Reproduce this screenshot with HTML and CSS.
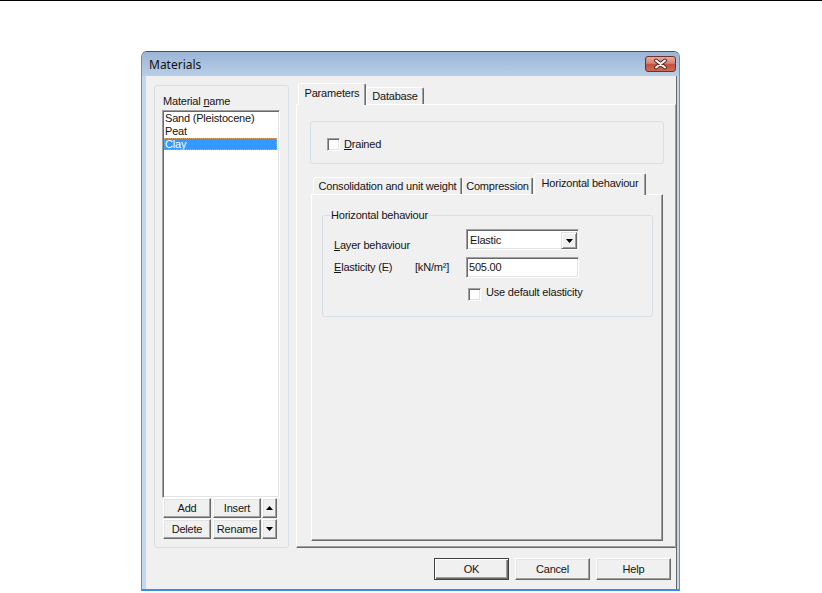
FILE: index.html
```html
<!DOCTYPE html>
<html>
<head>
<meta charset="utf-8">
<title>Materials</title>
<link rel="stylesheet" href="styles.css">
</head>
<body>
<div class="topline"></div>
<div class="window">
  <div class="titlebar">
    <span class="title">Materials</span>
    <div class="close">
      <svg width="29" height="14" viewBox="0 0 29 14"><path d="M10 3.5 L19 10.5 M19 3.5 L10 10.5" stroke="#5a2a24" stroke-width="4" stroke-linecap="round"/><path d="M10 3.5 L19 10.5 M19 3.5 L10 10.5" stroke="#fff" stroke-width="2" stroke-linecap="round"/></svg>
    </div>
  </div>
  <div class="client">
    <div class="main">
      <div class="group left-group">
        <div class="list-label">Material <u>n</u>ame</div>
        <div class="listbox">
          <div class="item">Sand (Pleistocene)</div>
          <div class="item">Peat</div>
          <div class="item selected">Clay</div>
        </div>
        <div class="btnrow">
          <button class="btn small">Add</button>
          <button class="btn small">Insert</button>
          <button class="btn arrow"><svg width="7" height="4" viewBox="0 0 7 4"><path d="M3.5 0 L7 4 L0 4Z"/></svg></button>
        </div>
        <div class="btnrow">
          <button class="btn small">Delete</button>
          <button class="btn small">Rename</button>
          <button class="btn arrow"><svg width="7" height="4" viewBox="0 0 7 4"><path d="M0 0 L7 0 L3.5 4Z"/></svg></button>
        </div>
      </div>
      <div class="tabctl">
        <div class="tabstrip">
          <div class="tab active tp">Parameters</div>
          <div class="tab td">Database</div>
        </div>
        <div class="page outer-page">
          <div class="group drained">
            <div class="check"><span class="cb"></span><span><u>D</u>rained</span></div>
          </div>
          <div class="inner-tabctl">
            <div class="tabstrip inner">
              <div class="tab t1">Consolidation and unit weight</div>
              <div class="tab t2">Compression</div>
              <div class="tab active t3">Horizontal behaviour</div>
            </div>
            <div class="page inner-page">
              <fieldset class="hgroup">
                <legend>Horizontal behaviour</legend>
                <div class="hgrid">
                  <div class="lbl lbl1 span2"><u>L</u>ayer behaviour</div>
                  <div class="combo"><span class="combo-text">Elastic</span><span class="ddbtn"><svg width="7" height="4" viewBox="0 0 7 4"><path d="M0 0 L7 0 L3.5 4Z"/></svg></span></div>
                  <div class="lbl lbl2"><u>E</u>lasticity (E)</div>
                  <div class="lbl lbl2">[kN/m²]</div>
                  <div class="edit">505.00</div>
                  <div class="check check3"><span class="cb"></span><span class="ctext">Use default elasticity</span></div>
                </div>
              </fieldset>
            </div>
          </div>
        </div>
      </div>
    </div>
    <div class="footer">
      <button class="btn big default">OK</button>
      <button class="btn big">Cancel</button>
      <button class="btn big">Help</button>
    </div>
  </div>
</div>
</body>
</html>
```

FILE: styles.css
```css
* { box-sizing: border-box; }
html, body { margin: 0; padding: 0; }
body {
  width: 822px;
  height: 593px;
  background: #fff;
  font-family: "Liberation Sans", Arial, sans-serif;
  font-size: 11px;
  letter-spacing: -0.2px;
  line-height: 13px;
  color: #141414;
  overflow: hidden;
}
u { text-decoration: underline; text-underline-offset: 1px; }

.topline { height: 1px; background: #000; }

.window {
  margin: 50px 0 0 141px;
  width: 539px;
  height: 540px;
  border: 1px solid #7f8b99;
  border-top-color: #4a525c;
  border-bottom: 2px solid #3a8de0;
  border-radius: 6px 6px 0 0;
  background: #c3d8ee;
  display: flex;
  flex-direction: column;
}

.titlebar {
  height: 24px;
  flex: none;
  display: flex;
  align-items: flex-start;
  background: linear-gradient(#9bb5d5, #b8cee8);
  border-radius: 5px 5px 0 0;
}
.title {
  font-family: "Noto Sans", "Open Sans", sans-serif;
  font-size: 12px;
  letter-spacing: 0;
  line-height: 24px;
  padding: 1px 0 0 7px;
  color: #111;
}
.close {
  margin: 4px 3px 0 auto;
  width: 31px;
  height: 16px;
  border: 1px solid #6e3129;
  border-radius: 3px;
  background: linear-gradient(#e6aa9e, #d68170 45%, #c4503e 52%, #d06a55);
  display: flex;
}

.client {
  flex: 1;
  margin: 0 2px 0 4px;
  background: #f0f0f0;
  border-right: 1px solid #696969;
  display: flex;
  flex-direction: column;
}

.main {
  display: flex;
  align-items: flex-start;
  padding: 7px 0 0 8px;
}

.group {
  border: 1px solid #d5dfe5;
  border-radius: 3px;
}

.left-group {
  margin-top: 2px;
  width: 135px;
  height: 463px;
  padding: 9px 0 0 7px;
  display: flex;
  flex-direction: column;
}
.list-label { margin-left: 1px; height: 13px; }
.listbox {
  margin-top: 2px;
  width: 118px;
  height: 388px;
  background: #fff;
  border: 1px solid;
  border-color: #a0a0a0 #fff #fff #a0a0a0;
  box-shadow: inset 1px 1px #696969, inset -1px -1px #e3e3e3;
  padding: 1px 2px 0 1px;
}
.item { height: 13px; padding-left: 1px; white-space: nowrap; }
.item.selected {
  background: #3399ff;
  color: #fff;
  outline: 1px dotted #d9a060;
  outline-offset: -1px;
  height: 12px;
}

.btnrow { display: flex; margin-left: 1px; }
.btnrow + .btnrow { margin-top: 1px; }

.btn {
  font: inherit;
  letter-spacing: inherit;
  color: #141414;
  background: #f0f0f0;
  border: 1px solid;
  border-color: #fff #696969 #696969 #fff;
  box-shadow: inset -1px -1px #a0a0a0, inset 1px 1px #e3e3e3;
  padding: 0;
  display: flex;
  align-items: center;
  justify-content: center;
}
.btn.small { width: 48px; height: 20px; margin-right: 2px; }
.btn.arrow { width: 15px; height: 20px; margin-left: -1px; }
.btn.big { width: 75px; height: 22px; }
.btn.default {
  border-color: #404040;
  box-shadow: inset 1px 1px #fff, inset -1px -1px #696969, inset -2px -2px #a0a0a0;
}

.tabctl {
  margin-left: 7px;
  width: 380px;
}
.tabstrip {
  display: flex;
  align-items: flex-end;
  height: 21px;
  padding-left: 2px;
}
.tab {
  background: #f0f0f0;
  border: 1px solid;
  border-bottom: none;
  border-color: #fff #696969 transparent #fff;
  box-shadow: inset -1px 0 #a0a0a0;
  border-radius: 2px 2px 0 0;
  white-space: nowrap;
  text-align: center;
  height: 17px;
  padding-top: 2px;
  overflow: hidden;
}
.tab.active {
  height: 22px;
  margin-bottom: -1px;
  padding-top: 3px;
  position: relative;
  z-index: 1;
}
.tp { width: 68px; }
.td { width: 58px; }
.t1 { width: 149px; }
.t2 { width: 71px; }
.t3 { width: 112px; margin-left: 1px; }

.page {
  border-top: 1px solid #fff;
  border-left: 1px solid #fff;
  border-right: 1px solid #696969;
  border-bottom: 1px solid #696969;
  box-shadow: inset -1px -1px #a0a0a0;
}
.outer-page {
  height: 444px;
  border-right-color: #a0a0a0;
  box-shadow: inset 0 -1px #a0a0a0;
  padding-top: 16px;
}

.drained {
  margin-left: 13px;
  width: 354px;
  height: 43px;
  padding: 16px 0 0 16px;
}
.check { display: flex; align-items: center; gap: 4px; white-space: nowrap; }
.cb {
  width: 13px;
  height: 13px;
  background: #fff;
  border: 1px solid;
  border-color: #a0a0a0 #fff #fff #a0a0a0;
  box-shadow: inset 1px 1px #696969, inset -1px -1px #e3e3e3;
  flex: none;
}

.inner-tabctl {
  margin: 9px 0 0 14px;
  width: 352px;
}
.inner-page { height: 347px; }

.hgroup {
  margin: 14px 0 0 10px;
  width: 331px;
  height: 108px;
  padding: 0;
  border: 1px solid #d5dfe5;
  border-radius: 3px;
  min-width: 0;
}
.hgroup legend {
  margin-left: 7px;
  padding: 0 1px;
  line-height: 13px;
}
.hgrid {
  display: grid;
  grid-template-columns: 81px 51px 113px;
  grid-template-rows: 28px 31px 13px;
  padding: 7px 0 0 11px;
  align-items: start;
}
.span2 { grid-column: 1 / span 2; }
.lbl1 { padding-top: 10px; }
.lbl2 { padding-top: 4px; white-space: nowrap; }

.combo, .edit {
  width: 113px;
  height: 21px;
  background: #fff;
  border: 1px solid;
  border-color: #a0a0a0 #fff #fff #a0a0a0;
  box-shadow: inset 1px 1px #696969, inset -1px -1px #e3e3e3;
}
.combo {
  display: flex;
  align-items: flex-start;
  padding: 2px 1px 0 3px;
}
.combo-text { flex: 1; padding-top: 2px; }
.ddbtn {
  width: 16px;
  height: 17px;
  background: #f0f0f0;
  border: 1px solid;
  border-color: #e3e3e3 #696969 #696969 #e3e3e3;
  box-shadow: inset 1px 1px #fff, inset -1px -1px #a0a0a0;
  display: flex;
  align-items: center;
  justify-content: center;
}
.edit { padding: 3px 0 0 2px; }

.check3 {
  grid-column: 3;
  margin-left: 2px;
  align-items: flex-start;
  width: 160px;
}
.ctext { margin-top: -2px; margin-left: 1px; }

.footer {
  display: flex;
  justify-content: flex-end;
  gap: 6px;
  padding: 10px 5px 0 0;
}
```
